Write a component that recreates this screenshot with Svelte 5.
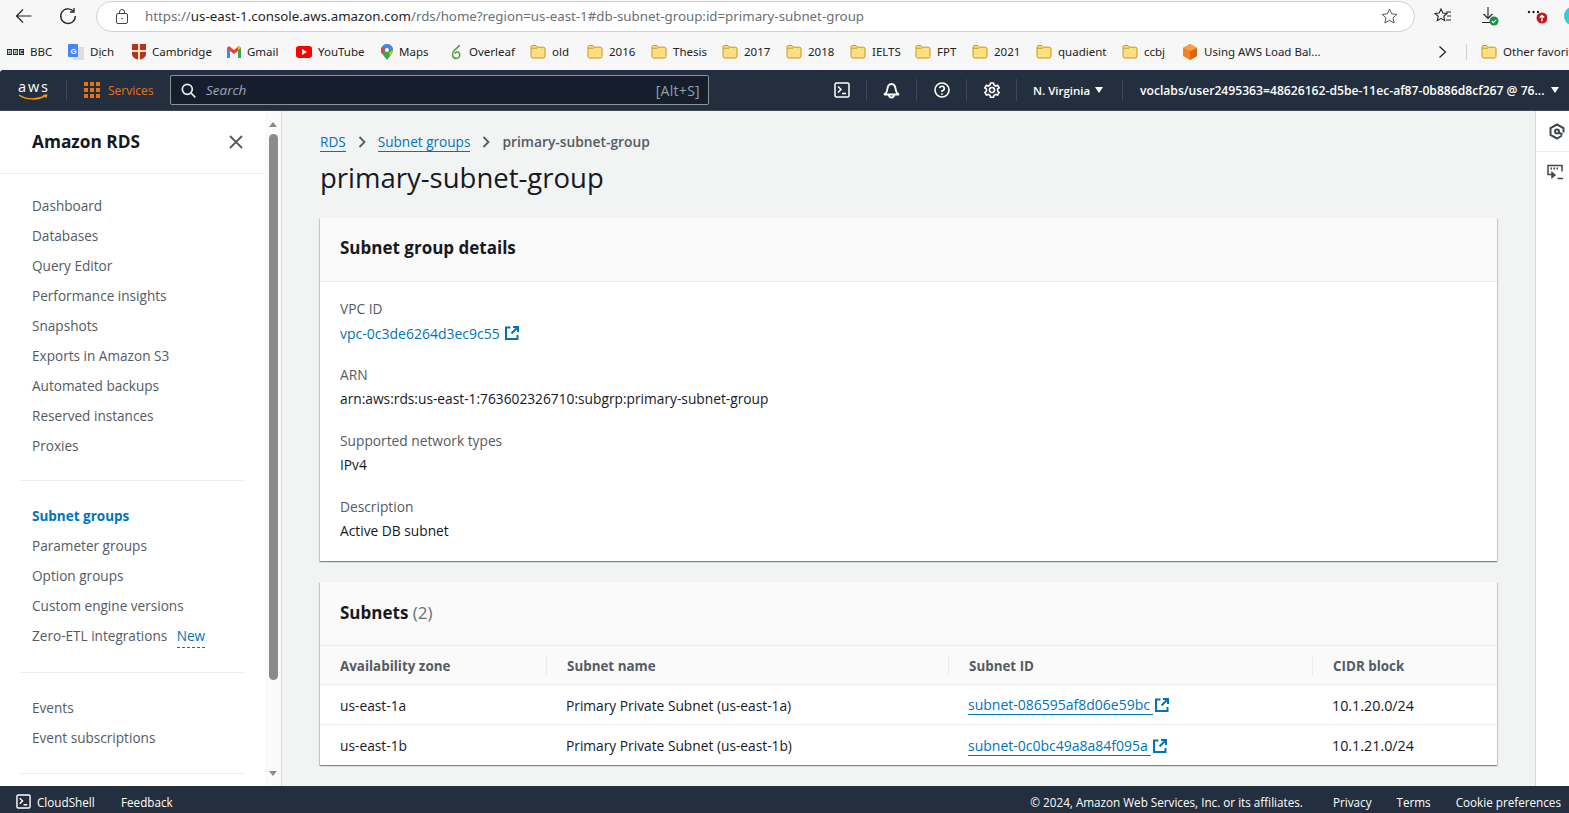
<script>
	const bookmarks = [
		{ label: 'old', w: 57 },
		{ label: '2016', w: 64 },
		{ label: 'Thesis', w: 71 },
		{ label: '2017', w: 64 },
		{ label: '2018', w: 64 },
		{ label: 'IELTS', w: 65 },
		{ label: 'FPT', w: 57 },
		{ label: '2021', w: 64 },
		{ label: 'quadient', w: 86 },
		{ label: 'ccbj', w: 60 }
	]
	const navTop = ['Dashboard', 'Databases', 'Query Editor', 'Performance insights', 'Snapshots', 'Exports in Amazon S3', 'Automated backups', 'Reserved instances', 'Proxies']
	const navMid = ['Parameter groups', 'Option groups', 'Custom engine versions']
	const details = [
		{ label: 'ARN', value: 'arn:aws:rds:us-east-1:763602326710:subgrp:primary-subnet-group' },
		{ label: 'Supported network types', value: 'IPv4' },
		{ label: 'Description', value: 'Active DB subnet' }
	]
	const subnets = [
		{ az: 'us-east-1a', name: 'Primary Private Subnet (us-east-1a)', id: 'subnet-086595af8d06e59bc', cidr: '10.1.20.0/24' },
		{ az: 'us-east-1b', name: 'Primary Private Subnet (us-east-1b)', id: 'subnet-0c0bc49a8a84f095a', cidr: '10.1.21.0/24' }
	]
</script>

{#snippet folder()}
	<svg class="folder" width="16" height="15" viewBox="0 0 16 15">
		<path d="M1 3.200C1 2 1.600 1.500 2.600 1.500h3.200l1.600 1.700h6c1 0 1.600.6 1.600 1.600v7.600c0 1-.6 1.600-1.600 1.600H2.600c-1 0-1.600-.6-1.600-1.600z" fill="#ffdf82" stroke="#c8970f" stroke-width="1" />
		<path d="M1 4.200h6" stroke="#c8970f" fill="none" />
	</svg>
{/snippet}

{#snippet external()}
	<svg class="ext" width="14" height="14" viewBox="0 0 14 14" fill="none" stroke="#0073bb" stroke-width="2">
		<path d="M5.500 1.500H1v11.500h11.500V9" />
		<path d="M8 1h5v5M13 1 6.500 7.500" />
	</svg>
{/snippet}

{#snippet shell(size)}
	<svg width={size} height={size} viewBox="0 0 16 16" fill="none" stroke="#fff" stroke-width="1.500">
		<rect x="1" y="1" width="14" height="14" rx="1.500" />
		<path d="m4 4.500 3 3-3 3M8 11.500h4" />
	</svg>
{/snippet}

<div class="page">
	<div class="browser">
		<button class="tool" aria-label="Back">
			<svg width="18" height="16" viewBox="0 0 18 16" fill="none" stroke="#222" stroke-width="1.200"><path d="M16.500 8H1.500M8 1.500 1.500 8 8 14.500" /></svg>
		</button>
		<button class="tool reload" aria-label="Reload">
			<svg width="18" height="18" viewBox="0 0 18 18" fill="none" stroke="#222" stroke-width="1.300"><path d="M14.600 4.500A7.300 7.300 0 1 0 16.300 9" /><path d="M15 1v4h-4" /></svg>
		</button>
		<div class="address">
			<svg class="lock" width="12" height="15" viewBox="0 0 12 15" fill="none" stroke="#444"><rect x=".5" y="4.500" width="11" height="10" rx="1.500" /><path d="M3.500 4.500V3a2.500 2.500 0 0 1 5 0v1.500" /><circle cx="6" cy="9.500" r=".8" fill="#444" stroke="none" /></svg>
			<span class="url">https://<b>us-east-1.console.aws.amazon.com</b>/rds/home?region=us-east-1#db-subnet-group:id=primary-subnet-group</span>
			<svg class="star" width="17" height="16" viewBox="0 0 17 16" fill="none" stroke="#555"><path d="m8.500 1 2.200 4.800 5.200.6-3.900 3.500 1.100 5.100-4.600-2.600-4.600 2.600 1.100-5.100L1.100 6.400l5.200-.6z" /></svg>
		</div>
		<div class="tool-right">
			<svg width="18" height="16" viewBox="0 0 18 16" fill="none" stroke="#222" stroke-width="1.100"><path d="m7 1 1.800 4 4.200.4-3.200 2.900.9 4.300L7 10.400l-3.700 2.200.9-4.300L1 5.400 5.200 5z" /><path d="M12 4h5M13 8h4M12 12h5" /></svg>
			<svg class="dl" width="18" height="20" viewBox="0 0 18 20" fill="none">
				<path d="M7 1v11M2.500 8 7 12.500 11.500 8M1 16.500h8" stroke="#222" stroke-width="1.100" />
				<circle cx="13" cy="15" r="4.500" fill="#1e8a44" />
				<path d="m10.800 15 1.600 1.600 2.800-2.800" stroke="#fff" stroke-width="1.200" />
			</svg>
			<svg class="more" width="20" height="20" viewBox="0 0 20 20">
				<g fill="#222"><circle cx="2" cy="6" r="1.200" /><circle cx="6.500" cy="6" r="1.200" /><circle cx="11" cy="6" r="1.200" /></g>
				<circle cx="15" cy="12" r="5.500" fill="#c4161c" />
				<path d="M15 15.500v-6M12.800 11.500 15 9.300l2.200 2.200" stroke="#fff" stroke-width="1.300" fill="none" />
			</svg>
			<i class="edge"></i>
		</div>
	</div>

	<div class="bookmarks">
		<span class="bm bbc-mark"><span class="bbc"><i>B</i><i>B</i><i>C</i></span>BBC</span>
		<span class="bm dich"><svg width="16" height="16" viewBox="0 0 16 16"><rect x="5" y="3" width="11" height="13" fill="#ddd" /><rect width="10" height="13" rx="1" fill="#4285f4" /><text x="2.500" y="9.500" font-size="8" font-weight="700" fill="#fff" font-family="Liberation Sans">G</text></svg>Dịch</span>
		<span class="bm cam"><svg width="14" height="16" viewBox="0 0 14 16"><path d="M0 0h14v10c0 3-3 5-7 6-4-1-7-3-7-6z" fill="#b5321f" /><path d="M6 0h2v16H6zM0 6h14v2H0z" fill="#f2e3c4" /></svg>Cambridge</span>
		<span class="bm gmail"><svg width="14" height="12" viewBox="0 0 14 12"><path d="M0 2v10h3V5l4 3 4-3v7h3V2L12 0 7 4 2 0z" fill="#ea4335" /><path d="M0 2v10h3V4z" fill="#4285f4" /><path d="M14 2v10h-3V4z" fill="#34a853" /><path d="M14 2l-3 2V1l1-1z" fill="#fbbc04" /></svg>Gmail</span>
		<span class="bm yt"><svg width="16" height="12" viewBox="0 0 16 12"><rect width="16" height="12" rx="3" fill="#f00" /><path d="m6 3 5 3-5 3z" fill="#fff" /></svg>YouTube</span>
		<span class="bm maps"><svg width="12" height="16" viewBox="0 0 12 16"><path d="M6 0a6 6 0 0 1 6 6c0 3-3 6-6 10-3-4-6-7-6-10a6 6 0 0 1 6-6z" fill="#34a853" /><path d="M6 0a6 6 0 0 1 6 6L1 3a6 6 0 0 1 5-3z" fill="#4285f4" /><path d="M1 3l4 3-4 4a6 6 0 0 1 0-7z" fill="#ea4335" /><path d="M8 9 12 6c0 2-2 4-3 6z" fill="#fbbc04" /><circle cx="6" cy="6" r="2" fill="#fff" /></svg>Maps</span>
		<span class="bm ol"><svg width="14" height="16" viewBox="0 0 12 16" fill="none" stroke="#4b9b3a" stroke-width="1.500"><path d="M9.500 1C9 3 7 3.500 4.500 6 1.500 9 2 14.500 6 14.500c3 0 4.500-2.500 3.500-5C8.500 7.500 6 7.500 4.500 9.500" /></svg>Overleaf</span>
		{#each bookmarks as b}
			<span class="bm" style="width: {b.w}px">{@render folder()}{b.label}</span>
		{/each}
		<span class="bm using"><svg width="16" height="16" viewBox="0 0 16 16"><path d="M8 0 15 4v8l-7 4-7-4V4z" fill="#f58220" /><path d="M8 7 15 4v8l-7 4z" fill="#d86613" /><path d="M8 0 15 4 8 7 1 4z" fill="#fb9d3b" /></svg>Using AWS Load Bal...</span>
		<svg class="chev" width="9" height="14" viewBox="0 0 9 14" fill="none" stroke="#222" stroke-width="1.200"><path d="m1.500 1.500 6 5.500-6 5.500" /></svg>
		<i class="bm-sep"></i>
		<span class="bm other">{@render folder()}Other favorites</span>
	</div>

	<header class="nav">
		<svg class="aws" width="31" height="28" viewBox="0 0 31 28">
			<text x="0" y="16" font-size="14.500" fill="#fff" font-family="Open Sans, sans-serif" textLength="30">aws</text>
			<path d="M1 19c7 5 19 5 25.500 1" fill="none" stroke="#ff9900" stroke-width="1.500" />
			<path d="m24.500 19 5-.8-1.200 4z" fill="#ff9900" />
		</svg>
		<i class="nav-sep first"></i>
		<svg class="grid" width="16" height="16" viewBox="0 0 16 16" fill="#ec7211">
			{#each [0, 6, 12] as y}
				{#each [0, 6, 12] as x}
					<rect {x} {y} width="4" height="4" />
				{/each}
			{/each}
		</svg>
		<span class="services">Services</span>
		<div class="search">
			<svg width="15" height="15" viewBox="0 0 15 15" fill="none" stroke="#e9ebed" stroke-width="1.700"><circle cx="6.300" cy="6.300" r="5" /><path d="m10 10 4.300 4.300" /></svg>
			<span class="ph">Search</span>
			<span class="hint">[Alt+S]</span>
		</div>
		<button class="nav-icon" aria-label="CloudShell">{@render shell(16)}</button>
		<button class="nav-icon" aria-label="Notifications">
			<svg width="17" height="17" viewBox="0 0 17 17" fill="none" stroke="#fff" stroke-width="1.800"><path d="M1 12.500c2-1 3-2 3.300-5 .3-3 1.800-5.500 4.200-5.500s3.900 2.500 4.200 5.500c.3 3 1.300 4 3.300 5z" /><path d="M6 13a2.500 2.500 0 0 0 5 0" /></svg>
		</button>
		<button class="nav-icon" aria-label="Help">
			<svg width="16" height="16" viewBox="0 0 16 16" fill="none" stroke="#fff" stroke-width="1.600"><circle cx="8" cy="8" r="7" /><path d="M5.700 6.200A2.300 2.300 0 1 1 8 8.800v1.200" /><path d="M8 11.200v1.500" /></svg>
		</button>
		<button class="nav-icon" aria-label="Settings">
			<svg width="16" height="16" viewBox="0 0 16 16" fill="none" stroke="#fff" stroke-width="1.600"><circle cx="8" cy="8" r="2.500" /><path d="M6.500 1h3l.4 2 1.700 1 2-.7 1.500 2.600-1.600 1.300v2l1.600 1.300-1.500 2.600-2-.7-1.700 1-.4 2h-3l-.4-2-1.700-1-2 .7L.9 10.500 2.500 9.200v-2L.9 5.900l1.500-2.600 2 .7 1.700-1z" /></svg>
		</button>
		<span class="region">N. Virginia<i class="caret"></i></span>
		<i class="nav-sep"></i>
		<span class="user">voclabs/user2495363=48626162-d5be-11ec-af87-0b886d8cf267 @ 76...<i class="caret"></i></span>
	</header>

	<div class="body">
		<aside class="side">
			<div class="side-head">
				<h2>Amazon RDS</h2>
				<svg width="14" height="14" viewBox="0 0 14 14" fill="none" stroke="#545b64" stroke-width="1.800"><path d="m1 1 12 12M13 1 1 13" /></svg>
			</div>
			<nav class="side-nav">
				{#each navTop as item}
					<a href="#/">{item}</a>
				{/each}
				<hr />
				<a href="#/" class="current">Subnet groups</a>
				{#each navMid as item}
					<a href="#/">{item}</a>
				{/each}
				<a href="#/">Zero-ETL integrations <span class="new">New</span></a>
				<hr class="second" />
				<a href="#/">Events</a>
				<a href="#/">Event subscriptions</a>
				<hr />
			</nav>
		</aside>
		<div class="scroll">
			<i class="up"></i>
			<i class="thumb"></i>
			<i class="down"></i>
		</div>

		<main class="main">
			<div class="crumbs">
				<a href="#/">RDS</a>
				<svg width="8" height="12" viewBox="0 0 8 12" fill="none" stroke="#545b64" stroke-width="1.800"><path d="m1.500 1 5 5-5 5" /></svg>
				<a href="#/">Subnet groups</a>
				<svg width="8" height="12" viewBox="0 0 8 12" fill="none" stroke="#545b64" stroke-width="1.800"><path d="m1.500 1 5 5-5 5" /></svg>
				<span>primary-subnet-group</span>
			</div>
			<h1>primary-subnet-group</h1>

			<section class="card">
				<div class="card-head"><h2>Subnet group details</h2></div>
				<div class="card-body">
					<div class="field">
						<div class="label">VPC ID</div>
						<div class="vpc"><span>vpc-0c3de6264d3ec9c55</span>{@render external()}</div>
					</div>
					{#each details as d}
						<div class="field">
							<div class="label">{d.label}</div>
							<div class="value">{d.value}</div>
						</div>
					{/each}
				</div>
			</section>

			<section class="card subnets">
				<div class="card-head"><h2>Subnets <span class="count">(2)</span></h2></div>
				<div class="row thead">
					<div>Availability zone</div>
					<div>Subnet name</div>
					<div>Subnet ID</div>
					<div>CIDR block</div>
				</div>
				{#each subnets as s}
					<div class="row">
						<div>{s.az}</div>
						<div>{s.name}</div>
						<div class="subnet-id"><a href="#/">{s.id}</a>{@render external()}</div>
						<div class="cidr">{s.cidr}</div>
					</div>
				{/each}
			</section>
		</main>

		<aside class="rail">
			<div class="rail-item">
				<svg width="16" height="17" viewBox="0 0 16 17" fill="none" stroke="#414750" stroke-width="2"><path d="M13 12.500 8 15.500 1.500 12V5L8 1.500 14.500 5v4.500" /><circle cx="8" cy="8.500" r="2" /><path d="m9.500 9.500 4 2" /></svg>
			</div>
			<div class="rail-item">
				<svg width="17" height="16" viewBox="0 0 17 16" fill="none" stroke="#414750" stroke-width="1.500"><path d="M6 10.500H1v-9h14v6" /><path d="M3.500 4.500h1.500M6.500 4.500H8M9.500 4.500H11" stroke-width="2" /><path d="m5 13.500 3-2.500-3-2.500zM10.500 14.500H16" fill="#414750" /></svg>
			</div>
		</aside>
	</div>

	<footer class="foot">
		<span class="cs">{@render shell(15)}CloudShell</span>
		<span class="fb">Feedback</span>
		<span class="copy">© 2024, Amazon Web Services, Inc. or its affiliates.</span>
		<span class="privacy">Privacy</span>
		<span class="terms">Terms</span>
		<span class="cookie">Cookie preferences</span>
	</footer>
</div>

<style>
	:global(body) {
		margin: 0;
		overflow: hidden;
	}
	* {
		box-sizing: border-box;
	}
	i {
		display: block;
		font-style: normal;
	}
	button {
		background: none;
		border: 0;
		padding: 0;
		display: flex;
		align-items: center;
		justify-content: center;
	}
	a {
		text-decoration: none;
	}
	.page {
		width: 1569px;
		height: 813px;
		overflow: hidden;
		display: flex;
		flex-direction: column;
		font-family: 'Open Sans', sans-serif;
		font-size: 13.750px;
		color: #16191f;
		background: #fff;
	}

	/* browser chrome */
	.browser {
		height: 34px;
		flex: none;
		background: #f7f7f7;
		display: flex;
		align-items: center;
		padding: 0 0 2px 15px;
	}
	.tool {
		width: 18px;
		height: 18px;
		flex: none;
	}
	.reload {
		margin: 0 0 0 26px;
	}
	.address {
		width: 1319px;
		height: 31px;
		flex: none;
		margin-left: 19px;
		border: 1px solid #d0d0d0;
		border-radius: 16px;
		background: #fff;
		display: flex;
		align-items: center;
		padding-left: 19px;
		font-family: 'Noto Sans', sans-serif;
		font-size: 13.300px;
	}
	.lock {
		flex: none;
	}
	.url {
		margin-left: 17px;
		color: #6b6f76;
		white-space: nowrap;
		width: 1236px;
	}
	.url b {
		font-weight: 400;
		color: #1f1f1f;
	}
	.star {
		flex: none;
	}
	.tool-right {
		display: flex;
		align-items: center;
		margin-left: 19px;
		height: 20px;
		flex: none;
	}
	.dl {
		margin-left: 29px;
		display: block;
	}
	.more {
		margin-left: 28px;
		display: block;
	}
	.edge {
		width: 16px;
		height: 18px;
		border-radius: 50% 0 0 50%;
		background: linear-gradient(160deg, #35c1f1, #3bd9a4);
		margin-left: 17px;
		flex: none;
	}

	.bookmarks {
		height: 36px;
		flex: none;
		background: #f7f7f7;
		display: flex;
		align-items: center;
		padding-left: 7px;
		font-family: 'Noto Sans', sans-serif;
		font-size: 11.500px;
		color: #222;
		white-space: nowrap;
		padding-bottom: 1px;
	}
	.bm {
		display: flex;
		align-items: center;
		gap: 6px;
		flex: none;
	}
	.folder {
		flex: none;
	}
	.bbc {
		display: flex;
		gap: 1px;
	}
	.bbc i {
		width: 5px;
		height: 6px;
		background: #222;
		color: #fff;
		font-family: 'Liberation Sans', sans-serif;
		font-size: 5px;
		font-weight: 700;
		line-height: 6px;
		text-align: center;
	}
	.bbc-mark {
		width: 61px;
	}
	.dich {
		width: 64px;
	}
	.cam {
		width: 95px;
	}
	.gmail {
		width: 69px;
	}
	.yt {
		width: 85px;
	}
	.maps {
		width: 68px;
	}
	.ol {
		width: 81px;
	}
	.using {
		width: 256px;
	}
	.chev {
		flex: none;
	}
	.bm-sep {
		width: 1px;
		height: 16px;
		background: #d0d0d0;
		margin: 0 14px 0 19px;
		flex: none;
	}

	/* aws top nav */
	.nav {
		height: 41px;
		flex: none;
		background: #232f3e;
		border-bottom: 1px solid #414750;
		border-radius: 3px 0 0 0;
		display: flex;
		align-items: center;
		padding-left: 18px;
		color: #fff;
	}
	.aws {
		flex: none;
	}
	.nav-sep {
		width: 1px;
		height: 22px;
		background: #414750;
		flex: none;
	}
	.nav-sep.first {
		margin: 0 17px 0 17px;
	}
	.grid {
		flex: none;
	}
	.services {
		color: #ec7211;
		font-size: 12px;
		margin-left: 8px;
		width: 62px;
	}
	.search {
		width: 539px;
		height: 30px;
		flex: none;
		background: #161e2d;
		border: 1px solid #879596;
		border-radius: 2px;
		display: flex;
		align-items: center;
		padding: 0 8px 0 10px;
		color: #9ba7b6;
		font-size: 13.500px;
	}
	.ph {
		font-style: italic;
		margin-left: 10px;
		flex: 1;
	}
	.hint {
		font-size: 14px;
		letter-spacing: .3px;
		color: #8fa3a8;
	}
	.nav-icon {
		width: 50px;
		height: 22px;
		flex: none;
		border-right: 1px solid #414750;
	}
	.search + .nav-icon {
		margin-left: 108px;
	}
	.region {
		font-size: 11.500px;
		font-weight: 600;
		margin-left: 16px;
		width: 89px;
		flex: none;
		display: flex;
		align-items: center;
		gap: 5px;
		color: #fff;
		white-space: nowrap;
	}
	.user {
		font-size: 12.150px;
		font-weight: 600;
		margin-left: 17px;
		display: flex;
		align-items: center;
		gap: 6px;
		white-space: nowrap;
	}
	.caret {
		width: 0;
		height: 0;
		border-left: 4.500px solid transparent;
		border-right: 4.500px solid transparent;
		border-top: 6px solid #fff;
		flex: none;
	}

	/* body */
	.body {
		flex: 1;
		min-height: 0;
		display: flex;
		background: #f2f3f3;
	}
	.side {
		width: 265px;
		flex: none;
		background: #fff;
		overflow: hidden;
	}
	.side-head {
		height: 63px;
		border-bottom: 1px solid #eaeded;
		display: flex;
		align-items: center;
		justify-content: space-between;
		padding: 0 22px 1px 32px;
	}
	.side-head h2 {
		margin: 0;
		font-size: 17.300px;
		font-weight: 700;
		color: #16191f;
	}
	.side-nav {
		display: flex;
		flex-direction: column;
		padding-top: 16px;
	}
	.side-nav a {
		height: 30px;
		line-height: 31px;
		padding-left: 32px;
		color: #545b64;
		font-size: 13.600px;
		white-space: nowrap;
	}
	.side-nav hr ~ a {
		line-height: 29px;
	}
	.side-nav a.current {
		color: #0073bb;
		font-weight: 700;
		font-size: 13.500px;
		line-height: 31px;
	}
	.side-nav hr {
		margin: 20px;
		border: 0;
		border-top: 1px solid #eaeded;
		height: 1px;
		width: 225px;
		flex: none;
	}
	.side-nav hr.second {
		margin-top: 21px;
	}
	.new {
		color: #0073bb;
		margin-left: 6px;
		border-bottom: 1px dashed #0073bb;
		padding-bottom: 2px;
	}
	.scroll {
		width: 16px;
		flex: none;
		background: #fafafa;
		display: flex;
		flex-direction: column;
		align-items: center;
		padding-top: 11px;
	}
	.up,
	.down {
		width: 0;
		height: 0;
		border-left: 4.500px solid transparent;
		border-right: 4.500px solid transparent;
	}
	.up {
		border-bottom: 5px solid #8b8b8b;
	}
	.down {
		border-top: 5px solid #8b8b8b;
		margin-top: 91px;
	}
	.thumb {
		width: 9px;
		height: 546px;
		background: #8b8b8b;
		border-radius: 5px;
		margin-top: 7px;
	}
	.main {
		flex: 1;
		min-width: 0;
		border-left: 1px solid #d5dbdb;
		padding: 21px 38px 0 38px;
	}
	.crumbs {
		display: flex;
		align-items: center;
		height: 19px;
		gap: 12px;
		font-size: 13.800px;
		color: #545b64;
		font-weight: 600;
	}
	.crumbs a {
		color: #0073bb;
		font-weight: 400;
		font-size: 13.600px;
		border-bottom: 1px solid #0073bb;
	}
	h1 {
		margin: 9px 0 22px;
		font-size: 27.500px;
		line-height: 36px;
		font-weight: 400;
		color: #16191f;
	}
	.card {
		background: #fff;
		box-shadow: 0 1px 1px 0 rgba(0, 28, 36, 0.3), 1px 1px 1px 0 rgba(0, 28, 36, 0.15), -1px 1px 1px 0 rgba(0, 28, 36, 0.15);
	}
	.card-head {
		height: 64px;
		background: #fafafa;
		border-bottom: 1px solid #eaeded;
		display: flex;
		align-items: center;
		padding: 0 0 5px 20px;
	}
	.card-head h2 {
		margin: 0;
		font-size: 17px;
		font-weight: 700;
	}
	.card-body {
		height: 279px;
		padding: 17px 20px 0;
	}
	.field {
		height: 66px;
	}
	.label {
		color: #545b64;
		height: 24px;
		line-height: 20px;
	}
	.value {
		line-height: 20px;
	}
	.vpc {
		display: flex;
		align-items: center;
		gap: 5px;
		color: #0073bb;
		height: 20px;
		font-size: 14px;
	}
	.subnets {
		margin-top: 21px;
	}
	.subnets .card-head {
		padding-bottom: 3px;
	}
	.count {
		font-weight: 400;
		color: #687078;
	}
	.row {
		display: grid;
		grid-template-columns: 226px 402px 364px 1fr;
		height: 40px;
		align-items: center;
		border-bottom: 1px solid #eaeded;
		padding-top: 1px;
	}
	.row:last-child {
		border-bottom: 0;
	}
	.row > div {
		padding-left: 20px;
		white-space: nowrap;
	}
	.thead {
		height: 39px;
		background: #fafafa;
		color: #545b64;
		font-weight: 700;
		font-size: 13.400px;
	}
	.thead > div + div {
		border-left: 1px solid #eaeded;
		line-height: 20px;
	}
	.subnet-id {
		display: flex;
		align-items: center;
		gap: 2px;
		font-size: 14px;
	}
	.subnet-id a {
		color: #0073bb;
		border-bottom: 1px solid #0073bb;
		line-height: 19px;
		padding-right: 3px;
	}
	.cidr {
		font-size: 14.300px;
	}
	.rail {
		width: 34px;
		flex: none;
		background: #fff;
		border-left: 1px solid #d5dbdb;
	}
	.rail-item {
		height: 41px;
		display: flex;
		align-items: center;
		justify-content: center;
		border-bottom: 1px solid #eaeded;
		padding-left: 8px;
	}
	.rail-item:last-child {
		border-bottom: 0;
		padding-bottom: 2px;
		padding-left: 5px;
	}
	.foot {
		height: 27px;
		flex: none;
		background: #232f3e;
		color: #fff;
		font-size: 11.700px;
		font-weight: 500;
		display: flex;
		align-items: center;
		padding: 4px 0 0 16px;
		white-space: nowrap;
	}
	.cs {
		display: flex;
		align-items: center;
		gap: 6px;
		width: 105px;
	}
	.fb {
		flex: 1;
	}
	.privacy {
		margin-left: 30px;
	}
	.terms {
		margin-left: 25px;
	}
	.cookie {
		margin: 0 8px 0 25px;
	}
</style>
